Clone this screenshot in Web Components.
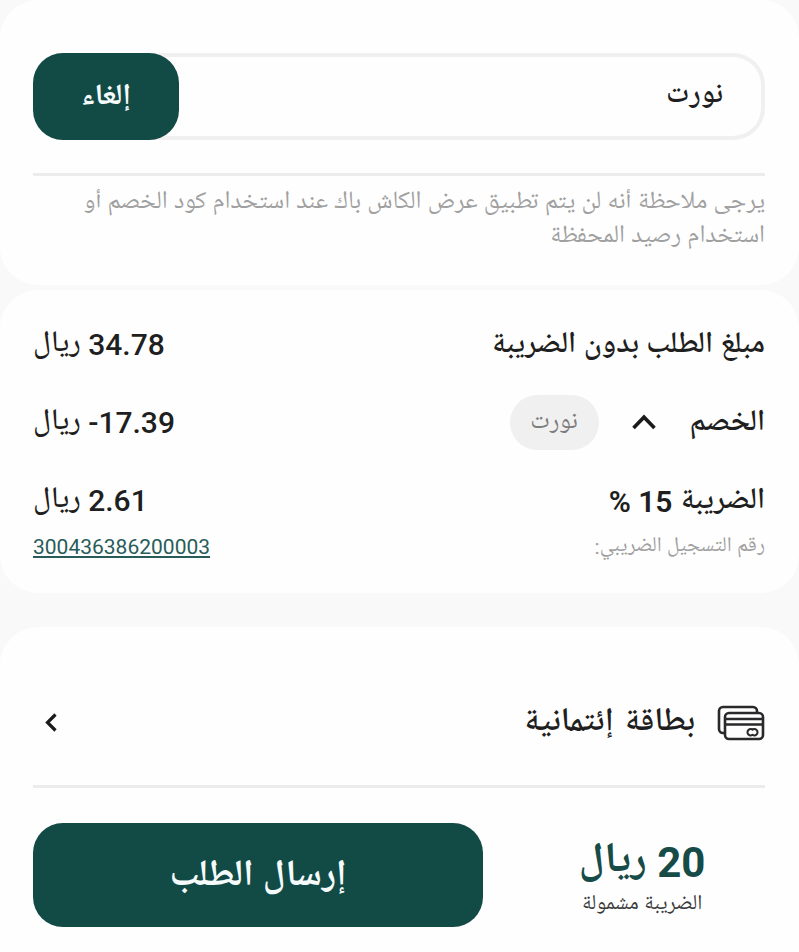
<!DOCTYPE html>
<html lang="ar" dir="rtl">
<head>
<meta charset="utf-8">
<title>إرسال الطلب</title>
<style>
  body {
    margin: 0;
    height: 952px;
    overflow: hidden;
    background: #f9f9f9;
    color: #1f1f21;
    font-family: Roboto, "Noto Naskh Arabic UI", "Noto Naskh Arabic", "DejaVu Sans", sans-serif;
  }
</style>
</head>
<body>
<checkout-page></checkout-page>

<script>
const define = (name, html) =>
  customElements.define(
    name,
    class extends HTMLElement {
      constructor() {
        super();
        const template = document.createElement("template");
        template.innerHTML = html;
        this.attachShadow({ mode: "open" }).appendChild(
          template.content.cloneNode(true)
        );
      }
    }
  );

define("sheet-card", /* HTML */ `
  <style>
    :host {
      display: block;
      box-sizing: border-box;
      padding: 0 34px 0 33px;
      background: #fefefe;
      border-radius: 38px;
    }
  </style>
  <slot></slot>
`);

define("thin-rule", /* HTML */ `
  <style>
    :host {
      display: block;
      height: 3px;
      background: #ececec;
    }
  </style>
`);

define("solid-button", /* HTML */ `
  <style>
    :host {
      display: block;
    }
    button {
      display: block;
      width: 100%;
      height: 100%;
      border: 0;
      padding: 0;
      border-radius: 30px;
      background: #124a46;
      color: #f4fbfa;
      font: inherit;
      font-weight: 700;
      letter-spacing: inherit;
    }
  </style>
  <button><slot></slot></button>
`);

define("coupon-field", /* HTML */ `
  <style>
    :host {
      display: flex;
      justify-content: space-between;
      height: 87px;
      border-radius: 32px;
      box-shadow: inset 0 0 0 4px #f0f0f0;
    }
    .code {
      padding-right: 42px;
      line-height: 86px;
      font-size: 29.5px;
      font-weight: 600;
    }
    solid-button {
      width: 146px;
      font-size: 29.5px;
      letter-spacing: 0.5px;
    }
  </style>
  <span class="code"><slot></slot></span>
  <solid-button><slot name="action"></slot></solid-button>
`);

define("amount-row", /* HTML */ `
  <style>
    :host {
      display: flex;
      justify-content: space-between;
      align-items: center;
      height: 78px;
      font-size: 30px;
      font-weight: 500;
    }
    .label {
      display: flex;
      align-items: center;
      font-weight: 600;
    }
  </style>
  <span class="label"><slot></slot></span>
  <slot name="value"></slot>
`);

define("money-text", /* HTML */ `
  <style>
    :host {
      display: block;
      padding-top: 2px;
      line-height: 40px;
      white-space: nowrap;
    }
  </style>
  <bdi dir="ltr"><slot name="sum"></slot></bdi> <slot></slot>
`);

define("code-chip", /* HTML */ `
  <style>
    :host {
      display: block;
      box-sizing: border-box;
      width: 89px;
      height: 55px;
      border-radius: 28px;
      background: #f0f0f0;
      color: #7d7d7d;
      font-size: 25px;
      font-weight: 400;
      line-height: 55px;
      text-align: center;
    }
  </style>
  <slot></slot>
`);

define("chevron-up", /* HTML */ `
  <style>
    :host { display: block; width: 24px; height: 16px; }
    svg { display: block; }
  </style>
  <svg width="24" height="16" fill="none" stroke="#1b1b1d" stroke-width="3.6">
    <path d="M1.5 14 12 3.2 22.5 14" />
  </svg>
`);

define("chevron-left", /* HTML */ `
  <style>
    :host { display: block; width: 12px; height: 19px; }
    svg { display: block; }
  </style>
  <svg width="12" height="19" fill="none" stroke="#1b1b1d" stroke-width="3.2">
    <path d="M10.5 1.5 2.5 9.5 10.5 17.5" />
  </svg>
`);

define("cards-icon", /* HTML */ `
  <style>
    :host { display: block; width: 48px; height: 36px; }
    svg { display: block; }
  </style>
  <svg width="48" height="36" fill="none" stroke="#29292b" stroke-width="2.6">
    <path d="M40 7.5V6a4 4 0 0 0-4-4H6a4 4 0 0 0-4 4V24a4 4 0 0 0 4 4H8" />
    <rect x="8" y="8" width="38" height="26" rx="4" />
    <path d="M8 14H46M8 19.5H46" />
    <g stroke-width="2">
      <path d="M36 25a3.200 3.200 0 1 0 0 4.400" />
      <path d="M35 29.400a3.200 3.200 0 1 0 0-4.400" />
    </g>
  </svg>
`);

define("checkout-page", /* HTML */ `
  <style>
    :host { display: block; }
    .coupon { height: 285px; padding-top: 53px; }
    .coupon thin-rule { margin-top: 33px; }
    .note {
      margin: 10px 0 0;
      color: #a0a0a0;
      font-size: 24.9px;
      line-height: 34px;
      white-space: nowrap;
    }
    .totals { height: 303px; margin-top: 5px; padding-top: 15px; }
    chevron-up { margin: 0 34px 0 33px; }
    .registration {
      display: flex;
      justify-content: space-between;
      align-items: center;
      height: 30px;
      margin-top: -7px;
      color: #a0a0a0;
      font-size: 21px;
      line-height: 30px;
    }
    .registration a {
      color: #285c59;
      text-decoration: underline 1.5px;
      text-underline-offset: 2px;
    }
    .payment { height: 360px; margin-top: 34px; }
    .method {
      display: flex;
      align-items: center;
      box-sizing: border-box;
      height: 158px;
      padding-top: 33px;
      font-size: 33px;
      font-weight: 600;
      letter-spacing: 1px;
      word-spacing: 2px;
    }
    .method span { margin-right: 22px; }
    chevron-left { margin: 0 auto 0 12px; }
    .submit {
      display: flex;
      justify-content: space-between;
      margin-top: 35px;
    }
    .submit solid-button {
      width: 450px;
      height: 104px;
      font-size: 37px;
      letter-spacing: 0.5px;
    }
    .total { width: 246px; text-align: center; padding-top: 11px; }
    .total money-text {
      height: 54px;
      line-height: 54px;
      color: #174b48;
      font-size: 42px;
      font-weight: 700;
    }
    .total small { display: block; font-size: 21.3px; line-height: 30px; color: #3a3a3c; }
  </style>
  <sheet-card class="coupon">
    <coupon-field>نورت<span slot="action">إلغاء</span></coupon-field>
    <thin-rule></thin-rule>
    <p class="note">يرجى ملاحظة أنه لن يتم تطبيق عرض الكاش باك عند استخدام كود الخصم أو<br>استخدام رصيد المحفظة</p>
  </sheet-card>
  <sheet-card class="totals">
    <amount-row>
      <span>مبلغ الطلب بدون الضريبة</span>
      <money-text slot="value"><span slot="sum">34.78</span>ريال</money-text>
    </amount-row>
    <amount-row>
      <span>الخصم</span>
      <chevron-up></chevron-up>
      <code-chip>نورت</code-chip>
      <money-text slot="value"><span slot="sum">-17.39</span>ريال</money-text>
    </amount-row>
    <amount-row>
      <span>الضريبة <bdi>15</bdi> %</span>
      <money-text slot="value"><span slot="sum">2.61</span>ريال</money-text>
    </amount-row>
    <div class="registration">
      <span>رقم التسجيل الضريبي:</span>
      <a>300436386200003</a>
    </div>
  </sheet-card>
  <sheet-card class="payment">
    <div class="method">
      <cards-icon></cards-icon>
      <span>بطاقة إئتمانية</span>
      <chevron-left></chevron-left>
    </div>
    <thin-rule></thin-rule>
    <div class="submit">
      <div class="total">
        <money-text><span slot="sum">20</span>ريال</money-text>
        <small>الضريبة مشمولة</small>
      </div>
      <solid-button>إرسال الطلب</solid-button>
    </div>
  </sheet-card>
`);
</script>
</body>
</html>
